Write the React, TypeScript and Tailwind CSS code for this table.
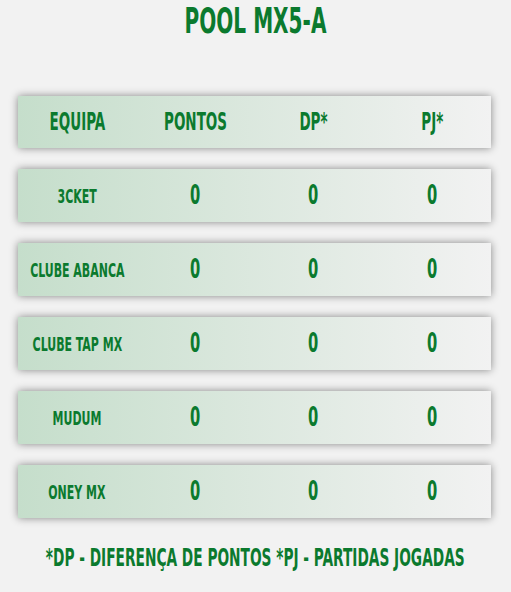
const rows = [
  { team: '3CKET', pts: 0, dp: 0, pj: 0 },
  { team: 'CLUBE ABANCA', pts: 0, dp: 0, pj: 0 },
  { team: 'CLUBE TAP MX', pts: 0, dp: 0, pj: 0 },
  { team: 'MUDUM', pts: 0, dp: 0, pj: 0 },
  { team: 'ONEY MX', pts: 0, dp: 0, pj: 0 },
]

const font = "font-['DejaVu_Sans_Condensed','Liberation_Sans',sans-serif] font-bold"

function Cell({ children, className = 'scale-x-[0.63]' }: { children: React.ReactNode; className?: string }) {
  return (
    <div className="flex items-center justify-center">
      <span className={`inline-block whitespace-nowrap ${className}`}>{children}</span>
    </div>
  )
}

export default function App() {
  return (
    <div className={`min-h-[592px] overflow-hidden bg-[#f2f2f2] text-[#0b7a2e] ${font}`}>
      <h1 className="flex justify-center pt-[1px] text-[36px] leading-[40px]">
        <span className="inline-block scale-x-[0.62] whitespace-nowrap">POOL MX5-A</span>
      </h1>

      <div className="ml-[18px] mr-[20px] mt-[55px] flex flex-col gap-[21px]">
        <div className="grid h-[52px] grid-cols-4 bg-gradient-to-r from-[#c5decb] to-[#f2f2f2] text-[25px] shadow-[0_0_8px_rgba(0,0,0,0.45)]">
          <Cell className="scale-x-[0.6]">EQUIPA</Cell>
          <Cell className="scale-x-[0.6]">PONTOS</Cell>
          <Cell className="scale-x-[0.6]">DP*</Cell>
          <Cell className="scale-x-[0.6]">PJ*</Cell>
        </div>
        {rows.map(r => (
          <div
            key={r.team}
            className="grid h-[53px] grid-cols-4 bg-gradient-to-r from-[#c5decb] to-[#f2f2f2] shadow-[0_0_8px_rgba(0,0,0,0.45)]"
          >
            <Cell className="scale-x-[0.61] text-[20px]">{r.team}</Cell>
            <Cell className="scale-x-[0.63] text-[26px]">{r.pts}</Cell>
            <Cell className="scale-x-[0.63] text-[26px]">{r.dp}</Cell>
            <Cell className="scale-x-[0.63] text-[26px]">{r.pj}</Cell>
          </div>
        ))}
      </div>

      <p className="mt-[25px] flex justify-center text-[25px] leading-[30px]">
        <span className="inline-block scale-x-[0.61] whitespace-nowrap">*DP - DIFERENÇA DE PONTOS *PJ - PARTIDAS JOGADAS</span>
      </p>
    </div>
  )
}
